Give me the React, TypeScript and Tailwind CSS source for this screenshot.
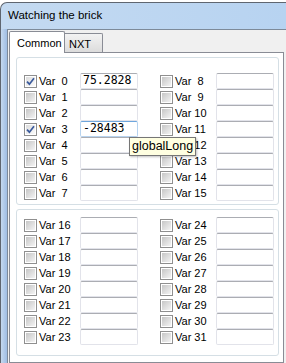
import React from "react";

function Check({ checked }: { checked?: boolean }) {
  return (
    <div className="w-[13px] h-[13px] shrink-0 border border-[#8f8f8f] bg-white p-px flex">
      <div
        className={
          checked
            ? "flex-1 flex items-center justify-center bg-gradient-to-br from-[#dcdcdc] to-[#fbfbfb]"
            : "flex-1 flex items-center justify-center bg-gradient-to-br from-[#c6c6c6] to-[#f4f4f4]"
        }
      >
        {checked && (
          <svg width="9" height="9" viewBox="0 0 9 9">
            <path d="M1 4.6 L3.4 7.2 L8 1.2" stroke="#3a5a9c" strokeWidth="1.7" fill="none" />
          </svg>
        )}
      </div>
    </div>
  );
}

function Row({ n, value, checked, focus }: { n: number; value?: string; checked?: boolean; focus?: boolean }) {
  return (
    <div className="h-[16px] flex items-center">
      <Check checked={checked} />
      <span className="ml-[2px] w-[41px] whitespace-pre leading-none text-black">
        {n < 10 ? `Var  ${n}` : `Var ${n}`}
      </span>
      <div
        className={
          focus
            ? "w-[58px] h-[16px] border rounded-[2px] bg-white flex items-center pl-[2px] font-['DejaVu_Sans_Mono',monospace] text-[11.5px] leading-none border-[#b7d3ef] border-t-[#6ea6dd]"
            : "w-[58px] h-[16px] border rounded-[2px] bg-white flex items-center pl-[2px] font-['DejaVu_Sans_Mono',monospace] text-[11.5px] leading-none border-[#e2e3ea] border-t-[#abadb3]"
        }
      >
        {value}
      </div>
    </div>
  );
}

const values: Record<number, string> = { 0: "75.2828", 3: "-28483" };
const checkedSet = new Set([0, 3]);

function Col({ start }: { start: number }) {
  return (
    <div className="flex flex-col">
      {Array.from({ length: 8 }, (_, i) => start + i).map((n) => (
        <Row key={n} n={n} value={values[n]} checked={checkedSet.has(n)} focus={n === 3} />
      ))}
    </div>
  );
}

export default function App() {
  return (
    <div className="w-[286px] h-[363px] overflow-hidden bg-white relative font-['Liberation_Sans',Arial,sans-serif] text-[11px] text-black">
      <div className="mt-[2px] h-[361px] border-t border-l border-[#5f6670] rounded-tl-[7px] bg-gradient-to-r from-[#c4daf1] to-[#b7d3f1] flex flex-col">
        <div className="h-[26px] pl-[7px] flex items-center text-[11.5px] text-black">Watching the brick</div>
        <div className="flex-1 flex min-h-0">
          <div className="w-[6px] bg-gradient-to-r from-[#c5d9ef] to-[#9fbde3]" />
          <div className="flex-1 border-l border-t border-[#7d8a99] bg-[#f0f0f0] pl-px pt-px flex flex-col min-h-0">
            <div className="h-[21px] flex items-end relative z-10">
              <div className="w-[56px] h-[22px] -mb-px border border-b-0 border-[#898c95] rounded-t-[2px] bg-white pl-[7px] pt-[3px] text-[11px]">
                Common
              </div>
              <div className="w-[38px] h-[19px] border border-l-0 border-b-0 border-[#898c95] rounded-tr-[2px] bg-gradient-to-b from-[#f3f3f3] to-[#dcdcdc] pl-[4px] pt-[2px] text-[11px]">
                NXT
              </div>
            </div>
            <div className="w-[275px] flex-1 border border-[#898c95] bg-white flex flex-col">
              <div className="ml-[6px] mt-[4px] w-[263px] h-[148px] border border-[#d5dfe5] rounded-[3px] pt-[15px] pl-[7px] flex gap-[22px]">
                <Col start={0} />
                <Col start={8} />
              </div>
              <div className="ml-[6px] mt-[4px] w-[263px] h-[147px] border border-[#d5dfe5] rounded-[3px] pt-[7px] pl-[7px] flex gap-[22px]">
                <Col start={16} />
                <Col start={24} />
              </div>
            </div>
          </div>
        </div>
      </div>
      <div className="absolute left-[129px] top-[137px] w-[67px] h-[19px] border border-[#767676] bg-[#ffffe1] pl-[2px] flex items-center text-[12.5px] leading-none shadow-[1px_1px_2px_rgba(0,0,0,0.25)]">
        globalLong
      </div>
    </div>
  );
}
